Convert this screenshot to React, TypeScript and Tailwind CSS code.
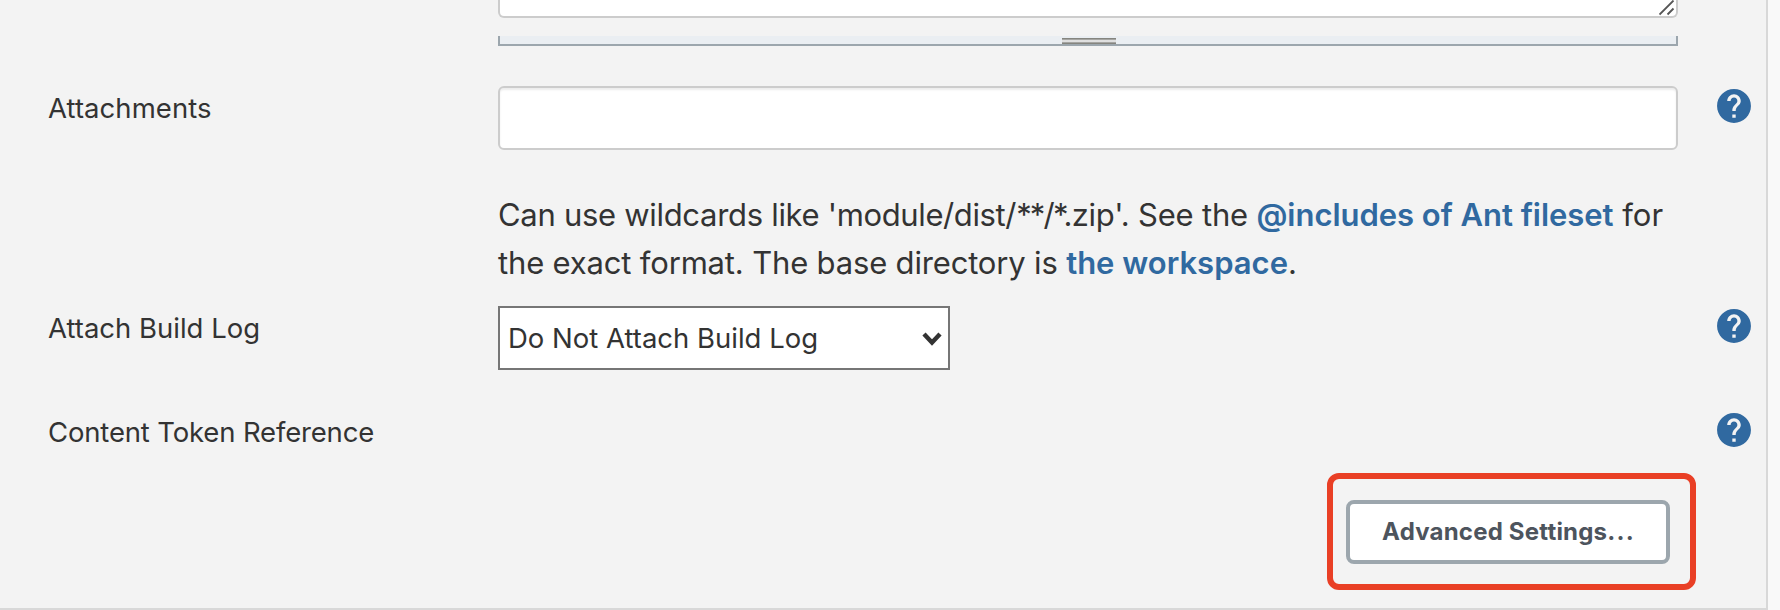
const HelpIcon = () => (
  <svg viewBox="0.2 0.2 23.6 23.6" className="size-10 shrink-0" fill="#3069a0" role="img" aria-label="Help">
    <path d="M12 2C6.48 2 2 6.48 2 12s4.48 10 10 10 10-4.48 10-10S17.52 2 12 2zm1 17h-2v-2h2v2zm2.07-7.75-.9.92C13.45 12.9 13 13.5 13 15h-2v-.5c0-1.1.45-2.1 1.17-2.83l1.24-1.26c.37-.36.59-.86.59-1.41 0-1.1-.9-2-2-2s-2 .9-2 2H8c0-2.21 1.79-4 4-4s4 1.79 4 4c0 .88-.36 1.68-.93 2.25z" />
  </svg>
);

const ROW = 'grid grid-cols-[450px_1180px_1fr] items-start pl-12';
const LABEL = 'text-[27.5px] leading-10 whitespace-nowrap';
const LINK = 'font-semibold text-[#3069a0]';

export default function App() {
  return (
    <div className="flex h-[610px] w-[1780px] overflow-hidden bg-[#f9f9f9] font-[Inter,sans-serif] text-[#333]">
      <div className="flex w-[1768px] flex-col border-r-2 border-b-2 border-[#d8d8d8] bg-[#f3f3f3]">
        <div className={ROW}>
          <div className="col-start-2">
            <div className="flex h-[18px] items-start justify-end rounded-b-md border-2 border-t-0 border-[#ccc] bg-white pr-px">
              <svg viewBox="0 0 16 16" className="size-4" stroke="#555" strokeWidth="1.8" fill="none">
                <path d="M0.5 14.5 14.5 0.5M8.5 14.5l6-6" />
              </svg>
            </div>
            <div className="mt-[18px] flex h-2.5 justify-center border-2 border-t-0 border-[#9ca6ad] bg-[#eaeef2] pt-0.5 pl-0.5">
              <div className="flex h-1.5 w-[54px] flex-col justify-between border-y border-[#85857f] bg-[#dfdfdf]">
                <div className="h-px bg-[#a5a5a2]" />
                <div className="h-px bg-[#a5a5a2]" />
              </div>
            </div>
          </div>
        </div>

        <div className={`${ROW} mt-10`}>
          <label className={`${LABEL} mt-0.5 tracking-[0.06px]`}>Attachments</label>
          <div>
            <input
              aria-label="Attachments"
              className="block h-16 w-full rounded-md border-2 border-[#ccc] bg-white px-3 shadow-[inset_0_2px_2px_rgba(0,0,0,0.075)]"
            />
            <p className="mt-[41px] text-[31px] leading-[48px] whitespace-nowrap">
              <span className="tracking-[-0.3px]">Can use wildcards like </span>
              <span className="tracking-[-0.38px]">'module/dist/</span>
              <span className="tracking-[-1.8px]">**/</span>
              <span className="tracking-[-0.8px]">*</span>
              <span className="tracking-[-0.8px]">.</span>
              <span className="tracking-[-0.2px]">zip'. See the </span>
              <a className={`${LINK} tracking-[-0.03px]`}>@includes of Ant fileset</a> for
              <br />
              <span className="tracking-[-0.17px]">the exact format. The base directory is </span>
              <a className={LINK}>the workspace</a>.
            </p>
          </div>
          <div className="flex justify-end pr-3">
            <HelpIcon />
          </div>
        </div>

        <div className={`${ROW} mt-[19px]`}>
          <label className={`${LABEL} mt-0.5`}>Attach Build Log</label>
          <div className="flex h-16 w-[452px] items-center justify-between border-2 border-[#767676] bg-white pr-1.5 pl-2">
            <span className="text-[27.5px] leading-10 whitespace-nowrap">Do Not Attach Build Log</span>
            <svg viewBox="0 0 20 14" className="mt-0.5 h-3.5 w-5" fill="none" stroke="#333" strokeWidth="4.4">
              <path d="M2 2l8 8.5L18 2" />
            </svg>
          </div>
          <div className="flex justify-end pr-3">
            <HelpIcon />
          </div>
        </div>

        <div className={`${ROW} mt-10`}>
          <label className={`${LABEL} mt-0.5 tracking-[-0.16px]`}>Content Token Reference</label>
          <div />
          <div className="flex justify-end pr-3">
            <HelpIcon />
          </div>
        </div>

        <div className="mt-[21px] mr-[70px] self-end rounded-xl border-6 border-[#e93f25] pt-[21px] pr-5 pb-5 pl-[13px]">
          <button className="flex h-16 w-[324px] items-center justify-center rounded-lg border-4 border-[#9ca6ad] bg-white pl-px text-2xl font-bold tracking-[0.2px] whitespace-nowrap text-[#4d545d]">
            <span>Advanced Settings<span className="tracking-[1.2px]">...</span></span>
          </button>
        </div>
      </div>
    </div>
  );
}
